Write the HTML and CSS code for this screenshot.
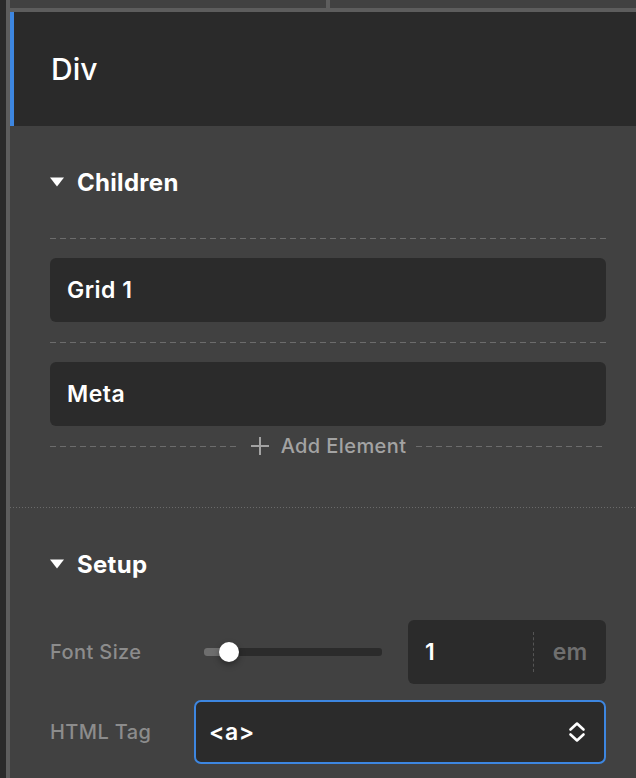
FILE: index.html
```html
<!DOCTYPE html>
<html>
<head>
  <meta charset="utf-8">
  <title>Inspector</title>
  <link rel="stylesheet" href="styles.css">
</head>
<body>
  <div class="app">
    <div class="rail"></div>

    <div class="inspector">
      <div class="tabs">
        <div class="tab"></div>
        <div class="tab"></div>
      </div>

      <div class="title">Div</div>

      <!-- children -->
      <section class="group">
        <h2 class="group-head">
          <svg class="caret" width="14" height="10" viewBox="0 0 14 10"><polygon points="0,0.5 14,0.5 7,9.5" fill="#fff"/></svg>
          Children
        </h2>
        <div class="children">
          <div class="drop"></div>
          <div class="child">Grid 1</div>
          <div class="drop"></div>
          <div class="child">Meta</div>
          <div class="add">
            <span class="add-label">
              <svg width="20" height="20" viewBox="0 0 20 20"><path d="M10 1v18M1 10h18" stroke="#a3a3a3" stroke-width="2"/></svg>
              Add Element
            </span>
          </div>
        </div>
      </section>

      <div class="divider"></div>

      <!-- setup -->
      <section class="group">
        <h2 class="group-head">
          <svg class="caret" width="14" height="10" viewBox="0 0 14 10"><polygon points="0,0.5 14,0.5 7,9.5" fill="#fff"/></svg>
          Setup
        </h2>

        <div class="field first">
          <label class="field-label">Font Size</label>
          <div class="slider">
            <div class="track">
              <div class="fill"></div>
              <div class="thumb"></div>
            </div>
          </div>
          <div class="num">
            <span class="num-value">1</span>
            <span class="num-unit">em</span>
          </div>
        </div>

        <div class="field">
          <label class="field-label">HTML Tag</label>
          <div class="select">
            <span>&lt;a&gt;</span>
            <svg width="18" height="22" viewBox="0 0 18 22"><path d="M2.5 8.5L9 2.5l6.5 6M2.5 13.5L9 19.5l6.5-6" fill="none" stroke="#fff" stroke-width="2.6" stroke-linecap="round" stroke-linejoin="round"/></svg>
          </div>
        </div>
      </section>
    </div>
  </div>
</body>
</html>
```

FILE: styles.css
```css
body {
  margin: 0;
  background: #2a2a2a;
  color: #fff;
  font-family: Inter, "Noto Sans", sans-serif;
  overflow: hidden;
}

.app {
  display: flex;
  height: 778px;
}

.rail {
  flex: none;
  width: 6px;
  background: #2a2a2a;
}

.inspector {
  flex: 1;
  min-width: 0;
  background: #414141;
  border-left: 4px solid #5d5d5d;
}

.tabs {
  display: flex;
  height: 8px;
  border-bottom: 4px solid #5d5d5d;
}

.tab {
  width: 316px;
  border-right: 4px solid #5d5d5d;
}

.tab + .tab {
  flex: 1;
  border-right: 0;
}

.title {
  display: flex;
  align-items: center;
  height: 114px;
  padding-left: 37px;
  background: #2a2a2a;
  border-left: 4px solid #3d86e0;
  font-size: 30px;
  font-weight: 500;
}

.group {
  padding: 44px 30px 0 40px;
}

.group-head {
  display: flex;
  align-items: center;
  gap: 13px;
  margin: 0;
  height: 24px;
  font-size: 24px;
  font-weight: 700;
  letter-spacing: 0.3px;
}

.children {
  margin-top: 44px;
  padding-bottom: 49px;
}

.drop {
  height: 1px;
  background: repeating-linear-gradient(to right, #6c6c6c 0 6px, transparent 6px 10px);
}

.child {
  display: flex;
  align-items: center;
  height: 64px;
  margin: 19px 0 20px;
  padding-left: 17px;
  border-radius: 6px;
  background: #2b2b2b;
  font-size: 23px;
  font-weight: 600;
  letter-spacing: 0.5px;
}

.add {
  display: flex;
  align-items: center;
  gap: 10px;
  height: 24px;
  margin-top: -12px;
}

.add::before,
.add::after {
  content: "";
  flex: 1;
  height: 1px;
  background: repeating-linear-gradient(to right, #6c6c6c 0 6px, transparent 6px 10px);
}

.add-label {
  display: flex;
  align-items: center;
  gap: 11px;
  color: #a3a3a3;
  font-size: 20px;
  font-weight: 500;
  letter-spacing: 0.4px;
}

.divider {
  height: 1px;
  background: repeating-linear-gradient(to right, #6a6a6a 0 1px, transparent 1px 3px);
}

.field {
  display: flex;
  align-items: center;
  height: 64px;
  margin-top: 16px;
}

.field.first {
  margin-top: 44px;
}

.field-label {
  width: 144px;
  color: #8c8c8c;
  font-size: 20px;
  font-weight: 500;
  letter-spacing: 0.4px;
}

.slider {
  flex: 1;
  padding: 0 10px;
}

.track {
  position: relative;
  height: 8px;
  border-radius: 3px;
  background: #2b2b2b;
}

.fill {
  width: 25px;
  height: 8px;
  border-radius: 3px 0 0 3px;
  background: #6e6e6e;
}

.thumb {
  position: absolute;
  left: 15px;
  top: -6px;
  width: 20px;
  height: 20px;
  border-radius: 50%;
  background: #fff;
  box-shadow: 0 3px 6px rgba(0, 0, 0, 0.35);
}

.num {
  display: flex;
  align-items: center;
  width: 198px;
  height: 64px;
  margin-left: 16px;
  border-radius: 6px;
  background: #2b2b2b;
  font-size: 23px;
  font-weight: 600;
}

.num-value {
  flex: 1;
  padding-left: 17px;
}

.num-unit {
  width: 72px;
  height: 40px;
  line-height: 40px;
  text-align: center;
  color: #6f6f6f;
  border-left: 1px dashed #555;
}

.select {
  flex: 1;
  display: flex;
  align-items: center;
  justify-content: space-between;
  height: 60px;
  padding: 0 18px 0 13px;
  border: 2px solid #3d86e0;
  border-radius: 7px;
  background: #2b2b2b;
  font-size: 23px;
  font-weight: 600;
  letter-spacing: 0.5px;
}
```
